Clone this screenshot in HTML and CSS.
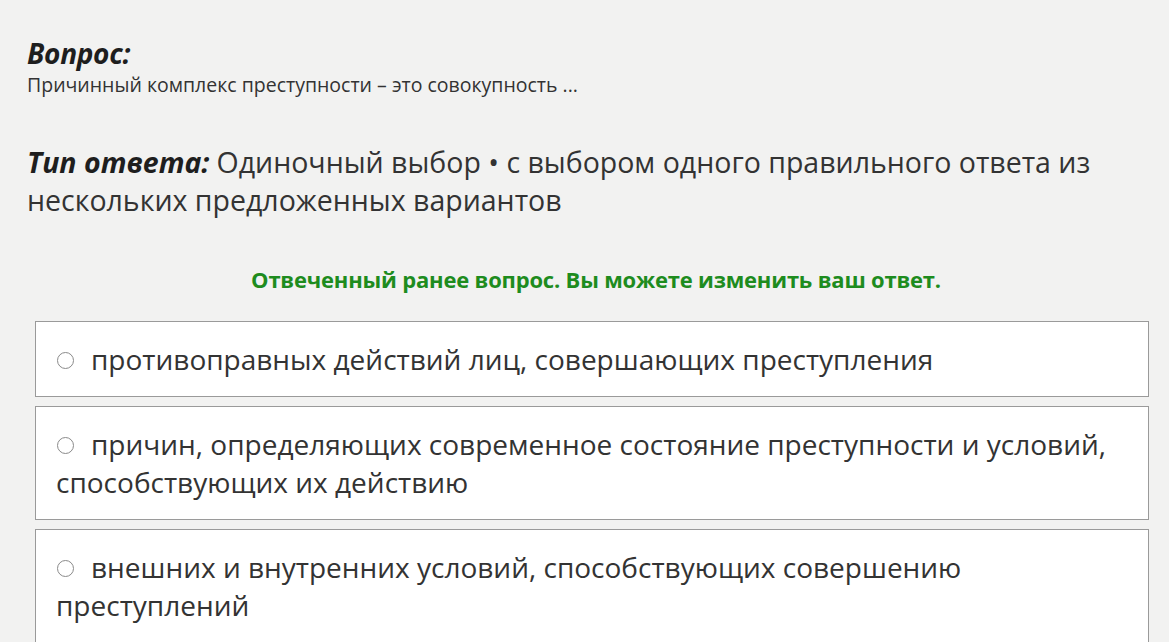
FILE: index.html
```html
<!DOCTYPE html>
<html lang="ru">
<head>
    <meta charset="UTF-8">
    <title>Вопрос</title>
    <link rel="stylesheet" href="styles.css">
</head>
<body>
    <div class="question">
        <h2 class="label">Вопрос:</h2>
        <p class="question-text">Причинный комплекс преступности – это совокупность ...</p>

        <p class="answer-type"><b>Тип ответа:</b>Одиночный выбор • с выбором одного правильного ответа из нескольких предложенных вариантов</p>

        <p class="notice">Отвеченный ранее вопрос. Вы можете изменить ваш ответ.</p>

        <div class="options">
            <label class="option"><span class="radio"></span>противоправных действий лиц, совершающих преступления</label>
            <label class="option"><span class="radio"></span>причин, определяющих современное состояние преступности и условий, способствующих их действию</label>
            <label class="option"><span class="radio"></span>внешних и внутренних условий, способствующих совершению преступлений</label>
        </div>
    </div>
</body>
</html>
```

FILE: styles.css
```css
body {
    margin: 0;
    padding: 0;
    background-color: #f2f2f1;
    font-family: "Open Sans", Arial, sans-serif;
    color: #222;
}

.question {
    padding: 35px 20px 0 27px;
}

.label {
    margin: 0;
    font-size: 28px;
    font-weight: bold;
    font-style: italic;
    line-height: 36px;
    letter-spacing: -0.3px;
    color: #1e1e1e;
}

.question-text {
    margin: 2px 0 0 0;
    font-size: 19.5px;
    line-height: 24px;
    color: #333;
}

.answer-type {
    margin: 46px 0 0 0;
    font-size: 28.5px;
    line-height: 38px;
    color: #333;
    max-width: 1100px;
}

.answer-type b {
    font-style: italic;
    color: #1e1e1e;
    margin-right: 7px;
}

.notice {
    margin: 45px 0 27px 0;
    text-align: center;
    font-size: 22px;
    line-height: 30px;
    font-weight: bold;
    letter-spacing: -0.2px;
    color: #1e8c1e;
    padding-left: 16px;
}

.options {
    margin: 0 0 0 8px;
    width: 1114px;
}

.option {
    display: block;
    background-color: #fff;
    border: 1px solid #9a9a9a;
    padding: 18px 20px;
    margin-bottom: 9px;
    font-size: 28px;
    line-height: 38px;
    color: #333;
}

/* кружок радиокнопки */
.radio {
    display: inline-block;
    box-sizing: border-box;
    width: 17px;
    height: 17px;
    margin: 0 17px 0 1px;
    border: 1.5px solid #8a8a8a;
    border-radius: 50%;
    background: #fff;
    vertical-align: 1px;
}
```
